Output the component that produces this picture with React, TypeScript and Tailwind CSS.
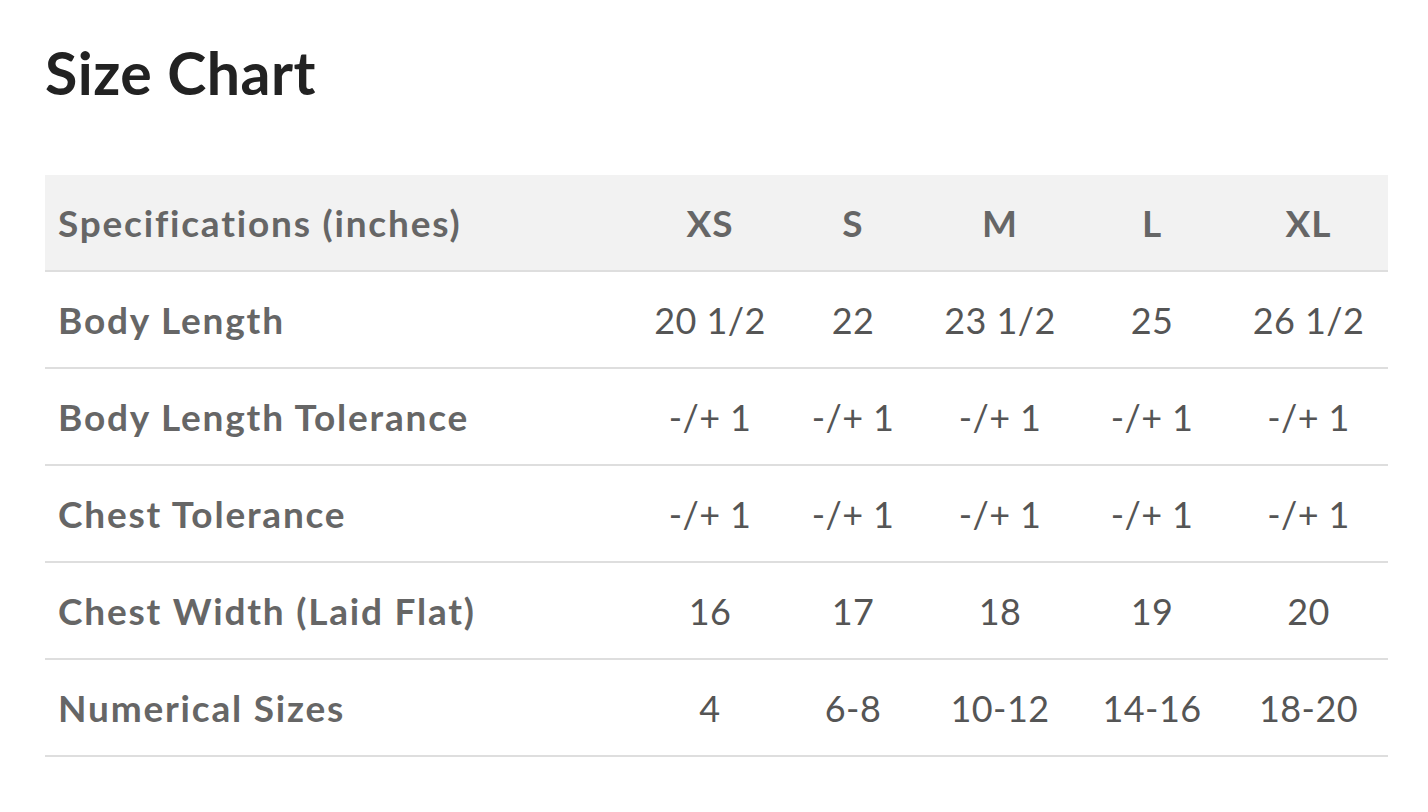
const sizes = ["XS", "S", "M", "L", "XL"];

const rows: { label: string; values: string[] }[] = [
  { label: "Body Length", values: ["20 1/2", "22", "23 1/2", "25", "26 1/2"] },
  { label: "Body Length Tolerance", values: ["-/+ 1", "-/+ 1", "-/+ 1", "-/+ 1", "-/+ 1"] },
  { label: "Chest Tolerance", values: ["-/+ 1", "-/+ 1", "-/+ 1", "-/+ 1", "-/+ 1"] },
  { label: "Chest Width (Laid Flat)", values: ["16", "17", "18", "19", "20"] },
  { label: "Numerical Sizes", values: ["4", "6-8", "10-12", "14-16", "18-20"] },
];

const gridCols = "grid grid-cols-[594px_142px_144px_150px_154px_159px]";

export default function App() {
  return (
    <div className="min-h-screen bg-white font-['Lato',sans-serif]">
      <div className="pl-[45px] pt-[43px]">
        <h1 className="text-[59px] font-bold leading-none tracking-[0.5px] text-[#222]">Size Chart</h1>

        <div className="mt-[73px] w-[1343px]">
          <div className={`${gridCols} h-[97px] items-center border-b-2 border-[#dedede] bg-[#f2f2f2]`}>
            <div className="pl-[13px] text-[37px] font-bold tracking-[1.8px] text-[#666]">Specifications (inches)</div>
            {sizes.map((s) => (
              <div key={s} className="text-center text-[37px] font-bold tracking-[1px] text-[#666]">
                {s}
              </div>
            ))}
          </div>

          {rows.map((row) => (
            <div key={row.label} className={`${gridCols} h-[97px] items-center border-b-2 border-[#dedede]`}>
              <div className="pl-[13px] text-[37px] font-bold tracking-[1.8px] text-[#666]">{row.label}</div>
              {row.values.map((v, i) => (
                <div key={i} className="text-center text-[36px] tracking-[0.4px] text-[#555]">
                  {v}
                </div>
              ))}
            </div>
          ))}
        </div>
      </div>
    </div>
  );
}
